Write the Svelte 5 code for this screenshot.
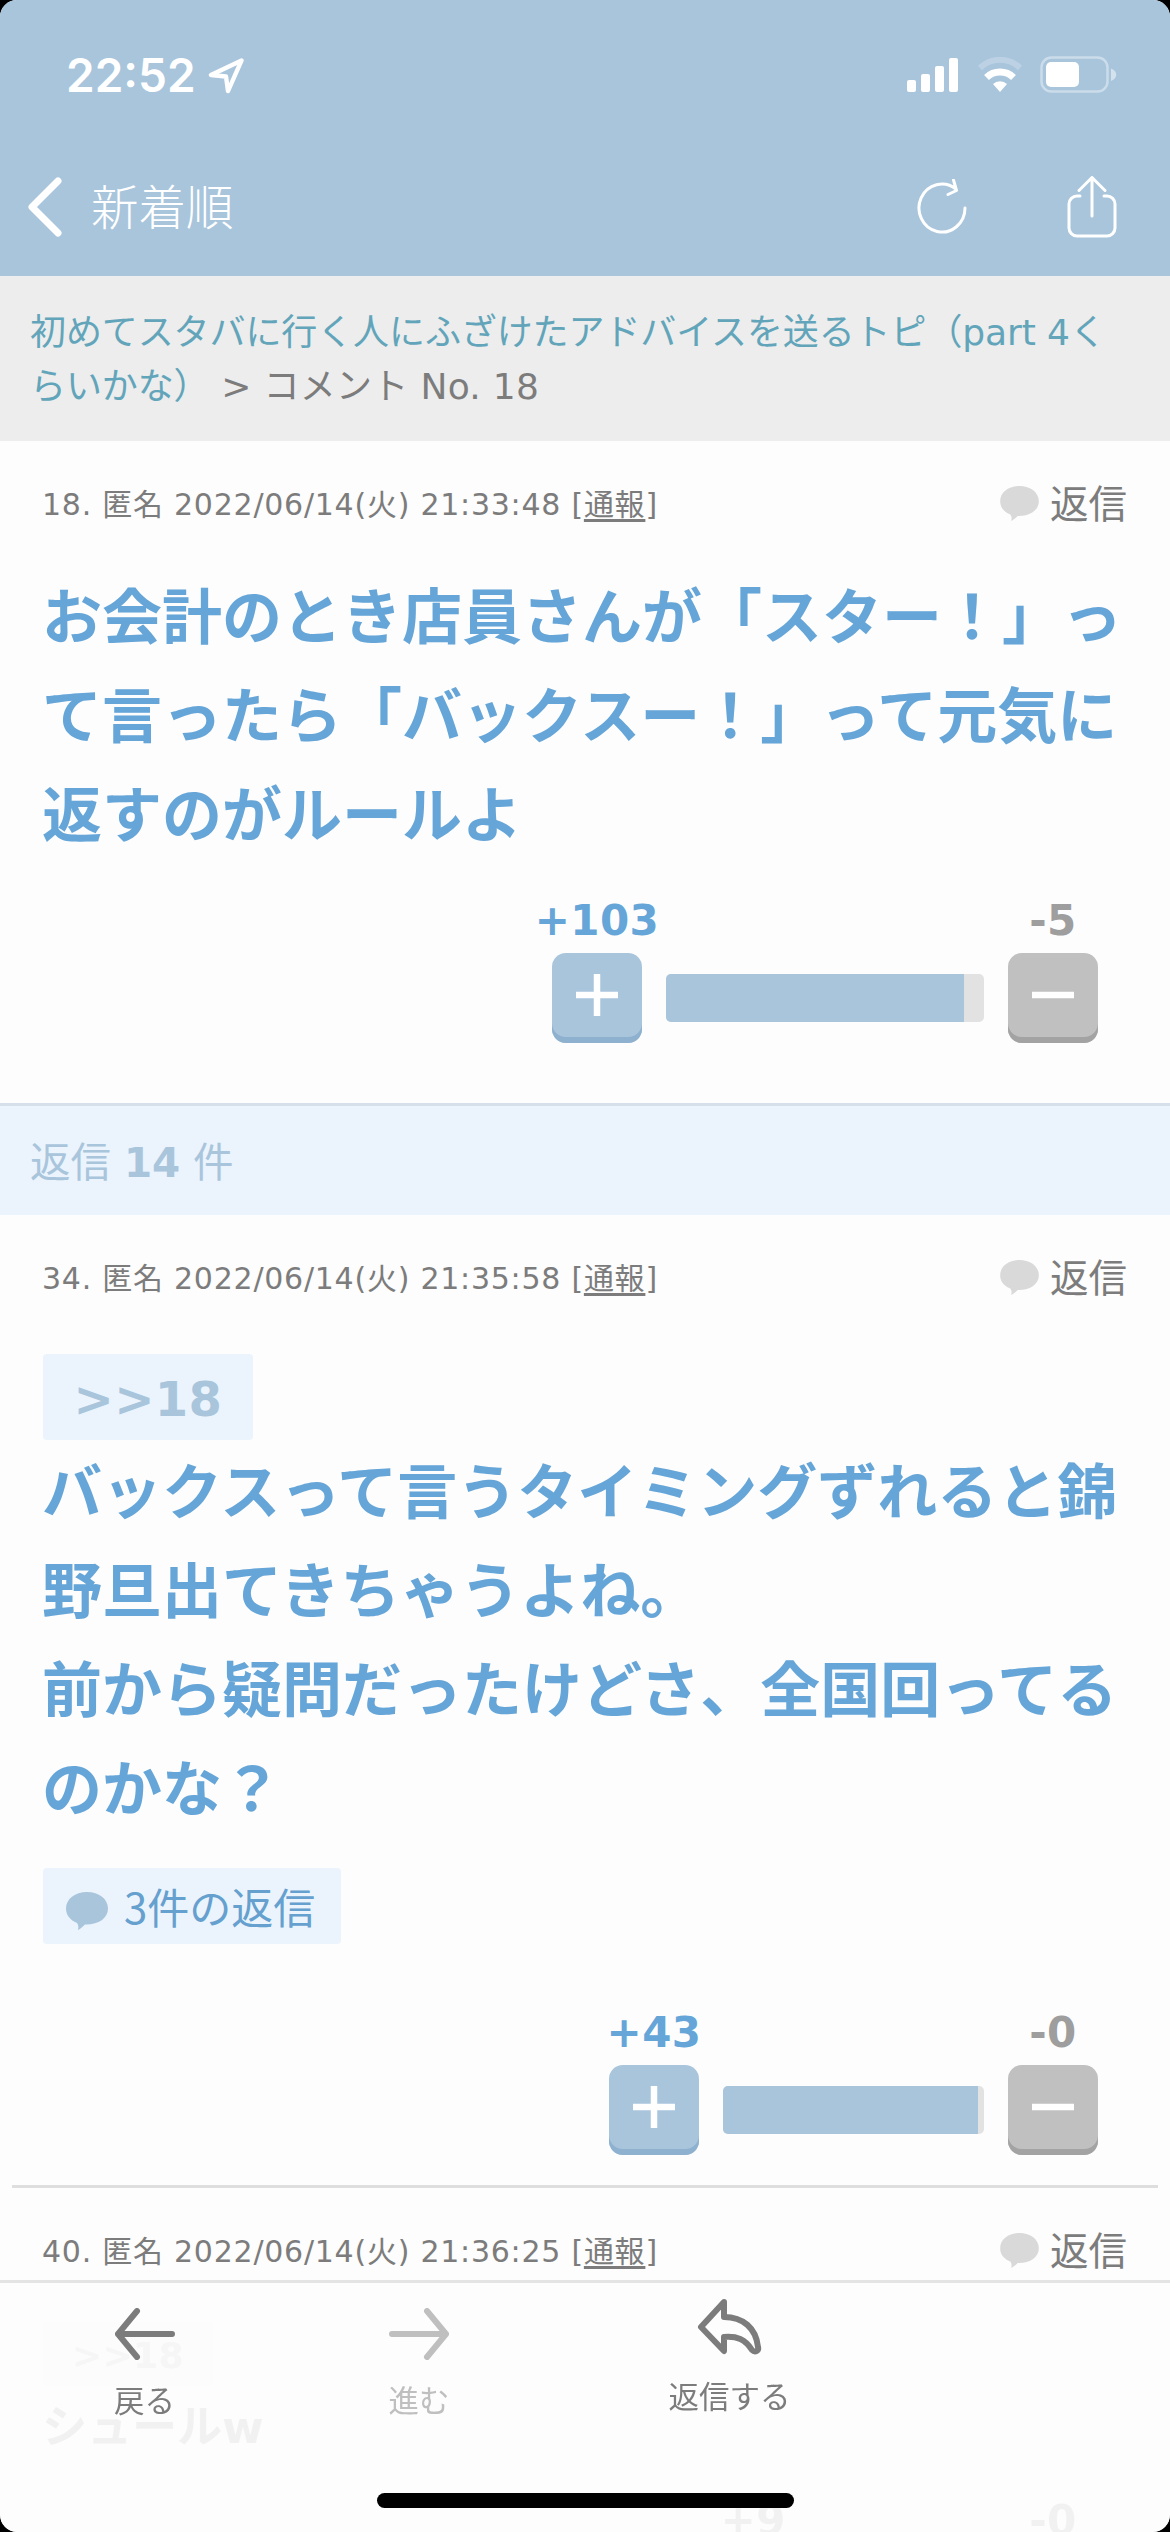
<!--
Comment thread screen: one parent comment, followed by its replies.

@component
-->
<script lang="ts">
	interface Post {
		no: number;
		date: string;
		quote?: string;
		body: string;
		replies?: number;
		plus: number;
		minus: number;
		/** Width of the whole vote bar in px; it shrinks with fewer votes. */
		barWidth: number;
		fillWidth: number;
		small?: boolean;
	}

	const parent: Post = {
		no: 18,
		date: '2022/06/14(火) 21:33:48',
		body: 'お会計のとき店員さんが「スター！」って言ったら「バックスー！」って元気に返すのがルールよ',
		plus: 103,
		minus: 5,
		barWidth: 318,
		fillWidth: 298
	};

	const replies: Post[] = [
		{
			no: 34,
			date: '2022/06/14(火) 21:35:58',
			quote: '>>18',
			body: 'バックスって言うタイミングずれると錦野旦出てきちゃうよね。\n前から疑問だったけどさ、全国回ってるのかな？',
			replies: 3,
			plus: 43,
			minus: 0,
			barWidth: 261,
			fillWidth: 255
		},
		{
			no: 40,
			date: '2022/06/14(火) 21:36:25',
			quote: '>>18',
			body: 'シュールw',
			plus: 9,
			minus: 0,
			barWidth: 162,
			fillWidth: 156,
			small: true
		}
	];
</script>

{#snippet bubble(className: string)}
	<svg class={className} viewBox="0 0 42 38" aria-hidden="true">
		<path d="M21 0C9 0 0 7 0 16.500c0 6.500 4 11.500 11 14.500 1.500 2 1.700 4 1 7 2.500-1.200 5-3.500 7-5.500C32 33 42 26.500 42 16.500 42 7 33 0 21 0z" />
	</svg>
{/snippet}

{#snippet post(p: Post)}
	<article class="post" class:small={p.small}>
		<div class="meta">
			<span class="info">{p.no}. 匿名 {p.date} [<a href="#report">通報</a>]</span>
			<span class="reply">{@render bubble('reply-icon')}返信</span>
		</div>
		{#if p.quote}
			<div class="quote">{p.quote}</div>
		{/if}
		<p class="body">{p.body}</p>
		{#if p.replies}
			<div class="replies">{@render bubble('replies-icon')}{p.replies}件の返信</div>
		{/if}
		<div class="votes">
			<div class="vote plus">
				<span class="count">+{p.plus}</span>
				<button aria-label="プラス">
					<svg viewBox="0 0 42 42"><path d="M0 21h42M21 0v42" /></svg>
				</button>
			</div>
			<div class="bar" style="width: {p.barWidth}px">
				<div class="fill" style="width: {p.fillWidth}px"></div>
			</div>
			<div class="vote minus">
				<span class="count">-{p.minus}</span>
				<button aria-label="マイナス">
					<svg viewBox="0 0 42 42"><path d="M0 21h42" /></svg>
				</button>
			</div>
		</div>
	</article>
{/snippet}

<div class="screen">
	<header>
		<div class="status">
			<div class="time">
				22:52
				<svg class="location" viewBox="0 0 38 38"><path d="M34.500 3.500 3 18.500l15.500 1.500L20.500 35z" /></svg>
			</div>
			<div class="indicators">
				<svg width="52" height="36" viewBox="0 0 52 36" fill="#fff">
					<rect x="0" y="23" width="9" height="12" rx="2" />
					<rect x="14" y="17" width="9" height="18" rx="2" />
					<rect x="28" y="9" width="9" height="26" rx="2" />
					<rect x="42" y="1" width="9" height="34" rx="2" />
				</svg>
				<svg class="wifi" width="46" height="36" viewBox="0 0 46 36" fill="none" stroke="#fff">
					<path d="M3 11a28.500 28.500 0 0 1 40 0" stroke-width="6" opacity=".22" />
					<path d="M9.500 20.500a19.500 19.500 0 0 1 27 0" stroke-width="7" />
					<path d="M16 27a10 10 0 0 1 14 0l-7 8z" fill="#fff" stroke="none" />
				</svg>
				<svg width="77" height="38" viewBox="0 0 77 38">
					<rect x="1.500" y="1.500" width="66" height="34" rx="10" fill="none" stroke="#fff" stroke-width="2.500" opacity=".4" />
					<rect x="6" y="6" width="33" height="25" rx="5" fill="#fff" />
					<path d="M71 12.500c7 2.500 7 10 0 12.500z" fill="#fff" opacity=".5" />
				</svg>
			</div>
		</div>
		<nav>
			<svg class="chevron" viewBox="0 0 34 60"><path d="M30 4 4 30l26 26" /></svg>
			<span class="title">新着順</span>
			<svg class="reload" viewBox="0 0 50 56">
				<path d="M48 29a23 24 0 1 1-9-19M36.500 1l3 10.500L31 15.500" />
			</svg>
			<svg class="share" viewBox="0 0 50 62">
				<path d="M13 20h-3a8 8 0 0 0-8 8v24a8 8 0 0 0 8 8h30a8 8 0 0 0 8-8V28a8 8 0 0 0-8-8h-3M25 40V2M12 14.500 25 1.500l13 13" />
			</svg>
		</nav>
	</header>

	<div class="crumbs">
		<a href="#topic">初めてスタバに行く人にふざけたアドバイスを送るトピ（part 4くらいかな）</a><span>&nbsp;&gt; コメント No. 18</span>
	</div>

	<main>
		{@render post(parent)}
		<h2>返信 <b>14</b> 件</h2>
		{#each replies as reply (reply.no)}
			{@render post(reply)}
		{/each}
	</main>

	<footer>
		<div class="tab">
			<svg width="62" height="52" viewBox="0 0 62 52"><path d="M58 26H4M23 3 4 26l19 23" /></svg>
			戻る
		</div>
		<div class="tab disabled">
			<svg width="62" height="52" viewBox="0 0 62 52"><path d="M4 26h54M39 3l19 23-19 23" /></svg>
			進む
		</div>
		<div class="tab respond">
			<svg width="66" height="56" viewBox="0 0 66 56">
				<path d="M27 3 4 28l23 24V38c13-1 21 2 28 13 3 3 7 1 6-3-2-19-15-30-34-30z" />
			</svg>
			返信する
		</div>
		<div class="home"></div>
	</footer>
</div>

<style>
	:global(body) {
		background: #000;
	}

	.screen {
		position: relative;
		width: 1170px;
		height: 2532px;
		overflow: hidden;
		border-radius: 17px;
		background: #fdfdfd;
		color: #7c7c7c;
		font-family: 'DejaVu Sans', 'Noto Sans CJK JP', sans-serif;
		text-spacing-trim: space-all;
	}

	svg {
		display: block;
		flex-shrink: 0;
	}

	/* Header */
	header {
		box-sizing: border-box;
		height: 276px;
		padding-top: 44px;
		background: #a9c5dc;
		color: #fff;
	}

	.status {
		display: flex;
		align-items: center;
		justify-content: space-between;
		height: 62px;
		padding: 0 53px 0 66px;
	}

	.time {
		display: flex;
		align-items: center;
		gap: 12px;
		font: 600 46px/62px Inter, sans-serif;
	}

	.location {
		width: 37px;
		height: 37px;
		fill: none;
		stroke: #fff;
		stroke-width: 4.5;
		stroke-linejoin: round;
	}

	.indicators {
		display: flex;
		align-items: center;
	}

	.wifi {
		margin: 0 17px 0 18px;
	}

	nav {
		display: flex;
		align-items: center;
		height: 100px;
		margin-top: 51px;
		padding: 0 53px 0 28px;
	}

	nav svg {
		fill: none;
		stroke: #fff;
		stroke-width: 3;
		stroke-linecap: round;
		stroke-linejoin: round;
	}

	nav .chevron {
		width: 34px;
		height: 60px;
		stroke-width: 7;
	}

	.title {
		flex: 1;
		margin: -4px 0 0 29px;
		font: 300 47.5px/60px 'Noto Sans CJK JP', sans-serif;
	}

	.reload {
		width: 50px;
		height: 56px;
	}

	.share {
		width: 50px;
		height: 62px;
		margin-left: 100px;
	}

	/* Breadcrumbs */
	.crumbs {
		box-sizing: border-box;
		height: 165px;
		padding: 30px 32px 0 30px;
		background: #ededed;
		font-size: 36px;
		line-height: 54px;
		letter-spacing: -0.1px;
		word-break: break-all;
	}

	.crumbs a {
		color: #62a5ba;
		text-decoration: none;
	}

	.crumbs span {
		letter-spacing: 0.3px;
	}

	/* Posts */
	.post {
		padding: 38px 43px 0 42px;
	}

	.meta {
		display: flex;
		align-items: center;
		justify-content: space-between;
		height: 52px;
		font-size: 30px;
		line-height: 52px;
	}

	.info {
		letter-spacing: 0.75px;
	}

	.meta a {
		color: inherit;
		text-underline-offset: 4px;
	}

	.reply {
		display: flex;
		align-items: center;
		gap: 11px;
		font-size: 38.5px;
	}

	.reply-icon {
		width: 39px;
		height: 35px;
		margin-top: -4px;
		fill: #d9d9d9;
	}

	.body {
		margin: 38px 0 0;
		color: #65a5d8;
		font-size: 60px;
		font-weight: 700;
		line-height: 99px;
		white-space: pre-line;
	}

	.quote {
		box-sizing: border-box;
		width: 210px;
		height: 86px;
		margin: 49px 0 0 1px;
		padding-top: 2px;
		border-radius: 4px;
		background: #ebf4fc;
		color: #a9c5dc;
		font-size: 48px;
		font-weight: 700;
		line-height: 86px;
		text-align: center;
		letter-spacing: 0.4px;
	}

	.quote + .body {
		margin-top: 4px;
	}

	.replies {
		display: flex;
		align-items: center;
		box-sizing: border-box;
		width: 298px;
		height: 76px;
		margin: 28px 0 0 1px;
		padding-left: 23px;
		gap: 16px;
		border-radius: 4px;
		background: #ebf4fc;
		color: #65a0cf;
		font: 42px/76px 'Noto Sans CJK JP', sans-serif;
	}

	.replies-icon {
		width: 42px;
		height: 38px;
		margin-top: 10px;
		fill: #a9c5dc;
	}

	.votes {
		display: flex;
		align-items: flex-end;
		justify-content: flex-end;
		gap: 24px;
		height: 146px;
		margin: 31px 29px 0 0;
	}

	.replies + .votes {
		margin-top: 65px;
	}

	.vote {
		display: flex;
		flex-direction: column;
		align-items: center;
		width: 90px;
	}

	.count {
		margin-bottom: 4px;
		font-size: 42px;
		font-weight: 700;
		line-height: 56px;
		white-space: nowrap;
		letter-spacing: 0.4px;
	}

	.vote button {
		width: 90px;
		height: 90px;
		padding: 0 0 6px;
		border: 0;
		border-radius: 14px;
	}

	.vote button svg {
		width: 42px;
		height: 42px;
		margin: 0 auto;
		stroke: #fff;
		stroke-width: 6.5;
	}

	.plus {
		color: #65a5d8;
	}

	.plus button {
		background: #a9c5dc;
		box-shadow: inset 0 -6px #8fb1d0;
	}

	.minus {
		color: #9e9e9e;
	}

	.minus button {
		background: #c0c0c0;
		box-shadow: inset 0 -6px #a3a3a3;
	}

	.bar {
		height: 48px;
		margin-bottom: 21px;
		overflow: hidden;
		border-radius: 5px;
		background: #e2e2e2;
	}

	.fill {
		height: 100%;
		background: #a9c5dc;
	}

	h2 {
		box-sizing: border-box;
		height: 112px;
		margin: 60px 0 0;
		padding-left: 30px;
		border-top: 3px solid #d5e0ea;
		background: #ebf4fc;
		color: #a9c5dc;
		font-size: 40.5px;
		font-weight: 400;
		line-height: 115px;
	}

	.post + .post::before {
		content: '';
		display: block;
		height: 3px;
		margin: -8px -31px 38px -30px;
		background: #dedede;
	}

	/* Posts with few votes are set smaller */
	.small .quote {
		width: 170px;
		height: 64px;
		margin-top: 44px;
		font-size: 36px;
		line-height: 64px;
	}

	.small .body {
		font-size: 45px;
		line-height: 76px;
	}

	/* Bottom bar */
	footer {
		position: absolute;
		inset: auto 0 0;
		box-sizing: border-box;
		height: 252px;
		display: grid;
		grid-template-columns: 289px 260px 361px;
		grid-template-rows: 210px 15px;
		border-top: 3px solid #e4e4e4;
		background: rgba(253, 253, 253, 0.88);
		backdrop-filter: grayscale(1);
	}

	.tab {
		display: flex;
		flex-direction: column;
		align-items: center;
		padding-top: 25px;
		font: 30.5px/44px 'Noto Sans CJK JP', sans-serif;
		gap: 17px;
	}

	.tab svg {
		fill: none;
		stroke: currentColor;
		stroke-width: 6;
		stroke-linecap: round;
		stroke-linejoin: round;
	}

	.disabled {
		color: #bfbfbf;
	}

	.respond {
		padding-top: 16px;
		gap: 18px;
	}

	.home {
		grid-column: 1 / -1;
		width: 417px;
		margin-left: 377px;
		border-radius: 8px;
		background: #000;
	}
</style>
